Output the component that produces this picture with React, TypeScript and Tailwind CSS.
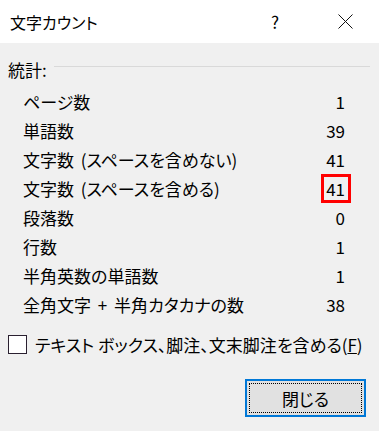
import React from "react";

const rows: { label: string; value: string; hl?: boolean }[] = [
  { label: "ページ数", value: "1" },
  { label: "単語数", value: "39" },
  { label: "文字数 (スペースを含めない)", value: "41" },
  { label: "文字数 (スペースを含める)", value: "41", hl: true },
  { label: "段落数", value: "0" },
  { label: "行数", value: "1" },
  { label: "半角英数の単語数", value: "1" },
  { label: "全角文字 + 半角カタカナの数", value: "38" },
];

export default function App() {
  return (
    <div
      className="w-[379px] h-[431px] flex flex-col text-black overflow-hidden [font-feature-settings:'palt'] [word-spacing:3px]"
      style={{ fontFamily: '"Noto Sans CJK JP", "Noto Sans", sans-serif' }}
    >
      <div className="h-[43px] bg-white flex items-center pl-[10px]">
        <span className="text-[16px] leading-none">文字カウント</span>
        <span className="ml-auto w-[20px] text-center text-[17px] leading-none [font-feature-settings:normal]">?</span>
        <div className="ml-[53px] mr-[26px] w-[15px] h-[15px]">
          <svg width="15" height="15" viewBox="0 0 15 15">
            <path d="M0.5 0.5 L14.5 14.5 M14.5 0.5 L0.5 14.5" stroke="#111" strokeWidth="1" fill="none" />
          </svg>
        </div>
      </div>
      <div className="flex-1 bg-[#f0f0f0] flex flex-col pt-[16px]">
        <div className="flex items-center h-[20px] pl-[8px] pr-[9px]">
          <span className="text-[17px] leading-none">統計:</span>
          <div className="flex-1 h-px bg-[#d9d9d9] ml-[7px] mb-[5px]" />
        </div>
        <div className="mt-[8px] flex flex-col">
          {rows.map((r) => (
            <div key={r.label} className="h-[29px] flex items-center pl-[23px] pr-[28px]">
              <span className="text-[17px] leading-none">{r.label}</span>
              <span
                className={
                  r.hl
                    ? "ml-auto w-[30px] h-[29px] border-[3px] border-[#ff0000] flex items-center justify-end pr-[3px] text-[17px] leading-none"
                    : "ml-auto w-[30px] h-[29px] border-[3px] border-transparent flex items-center justify-end pr-[3px] text-[17px] leading-none"
                }
              >
                {r.value}
              </span>
            </div>
          ))}
        </div>
        <div className="mt-[15px] h-[20px] flex items-center pl-[8px]">
          <div className="w-[19px] h-[19px] border border-[#2a2030] bg-white" />
          <span className="ml-[8px] text-[17px] leading-none [word-spacing:0px]">
            テキスト ボックス、脚注、文末脚注を含める(<span className="underline">F</span>)
          </span>
        </div>
        <div className="mt-[25px] flex justify-end pr-[13px]">
          <div className="w-[121px] h-[38px] border-2 border-[#0078d7] bg-[#e1e1e1] p-[2px]">
            <div className="w-full h-full border border-dotted border-black flex items-center justify-center text-[17px] leading-none">
              閉じる
            </div>
          </div>
        </div>
      </div>
    </div>
  );
}
